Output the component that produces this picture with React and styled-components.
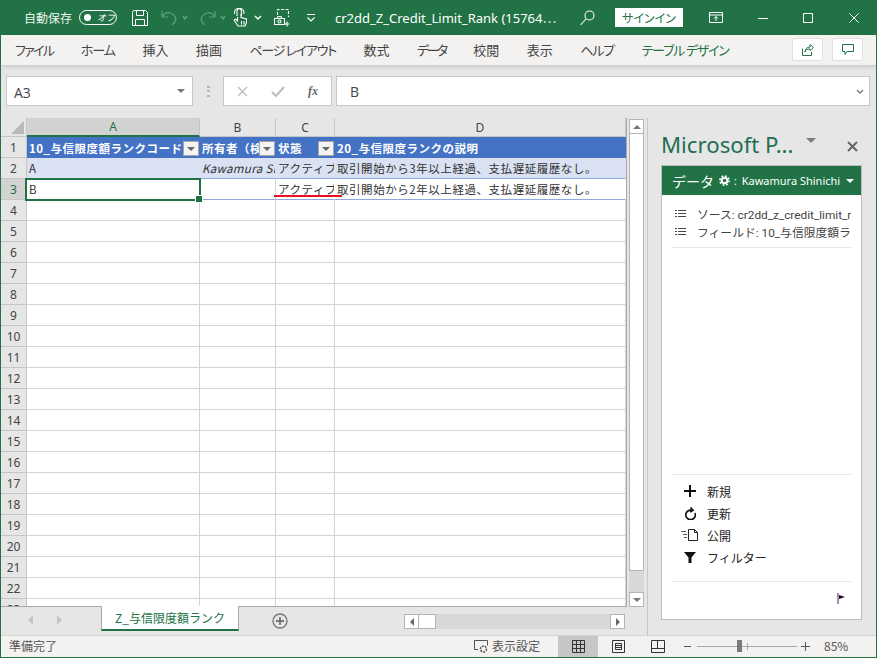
import React from 'react';
import styled, { createGlobalStyle } from 'styled-components';

const JP = `"Noto Sans CJK JP", "Noto Sans", sans-serif`;
const UI = `"Open Sans", "Noto Sans CJK JP", sans-serif`;
const GREEN = '#217346';

const GlobalStyle = createGlobalStyle`
  html, body { margin: 0; padding: 0; background: #e6e6e6; }
  * { box-sizing: border-box; }
`;

const Window = styled.div`
  width: 877px;
  height: 658px;
  display: flex;
  flex-direction: column;
  overflow: hidden;
  border: 1px solid ${GREEN};
  border-top: 0;
  background: #e6e6e6;
  font-family: ${UI};
`;

const TitleBar = styled.div`
  height: 35px;
  flex: none;
  display: flex;
  align-items: center;
  background: ${GREEN};
  color: #fff;
  font-size: 13px;
`;

const Slot = styled.div`
  flex: none;
  display: flex;
  align-items: center;
  margin-left: ${props => props.$left || 0}px;
  svg { display: block; }
`;

const AutoSave = styled.span`
  font-family: ${JP};
  font-size: 12px;
  margin-left: 23px;
  color: #eef5f0;
`;

const Toggle = styled.div`
  width: 38px;
  height: 15px;
  margin-left: 7px;
  border: 1px solid #fff;
  border-radius: 8px;
  display: flex;
  align-items: center;
  padding-left: 4px;
  gap: 6px;
  font-family: ${JP};
  font-size: 9px;
  font-style: italic;
  &::before {
    content: '';
    width: 7px;
    height: 7px;
    border-radius: 50%;
    background: #fff;
  }
`;

const DocTitle = styled.div`
  margin-left: 19px;
  width: 228px;
  white-space: nowrap;
  font-family: "Noto Sans", "Noto Sans CJK JP", sans-serif;
`;

const SignIn = styled.button`
  margin-left: 20px;
  width: 68px;
  height: 19px;
  border: 0;
  padding: 0;
  background: #fff;
  color: ${GREEN};
  font-family: ${JP};
  font-feature-settings: "palt";
  font-size: 12px;
`;

const RibbonTabs = styled.div`
  height: 30px;
  flex: none;
  display: flex;
  align-items: center;
  padding: 0 13px 1px 14px;
  gap: 27.5px;
  background: #f3f2f1;
  box-shadow: 0 2px 4px rgba(0, 0, 0, 0.12);
  position: relative;
  z-index: 1;
`;

const RibbonTab = styled.span`
  flex: none;
  white-space: nowrap;
  font-family: ${JP};
  font-feature-settings: "palt";
  font-size: 13px;
  letter-spacing: ${props => props.$tight || 0}px;
  color: ${props => (props.$active ? GREEN : '#444')};
`;

const RibbonAside = styled.div`
  margin-left: auto;
  display: flex;
  gap: 9px;
`;

const RibbonButton = styled.div`
  width: 31px;
  height: 23px;
  display: flex;
  align-items: center;
  justify-content: center;
  background: #fff;
  border: 1px solid #e1dfdd;
  border-radius: 2px;
`;

const FormulaBar = styled.div`
  height: 53px;
  flex: none;
  display: flex;
  align-items: flex-start;
  padding-top: 11px;
  padding-left: 5px;
`;

const FormulaBox = styled.div`
  height: 30px;
  background: #fff;
  border: 1px solid #c6c6c6;
  display: flex;
  align-items: center;
  color: #444;
  font-size: 14px;
  width: ${props => props.$w}px;
  margin-left: ${props => props.$left || 0}px;
  padding: ${props => props.$pad || '0 7px'};
  justify-content: space-between;
`;

const NameText = styled.span`
  margin-top: 3px;
`;

const Dots = styled.div`
  width: 3px;
  height: 11px;
  margin: 10px 0 0 14px;
  background: repeating-linear-gradient(#b5b5b5 0 2px, transparent 2px 4.5px);
`;

const Fx = styled.i`
  font-family: "Liberation Serif", serif;
  font-weight: bold;
  font-size: 12px;
  color: #666;
`;

const Main = styled.div`
  flex: 1;
  min-height: 0;
  display: flex;
`;

const SheetArea = styled.div`
  width: 647px;
  flex: none;
  display: flex;
  flex-direction: column;
  border-right: 1px solid #c6c6c6;
`;

const GridRow = styled.div`
  height: 489px;
  flex: none;
  display: flex;
`;

const Grid = styled.div`
  width: 626px;
  height: 489px;
  flex: none;
  overflow: hidden;
  position: relative;
  background: #fff;
  border-right: 1px solid #a8a8a8;
  border-bottom: 1px solid #a8a8a8;
  display: grid;
  grid-template-columns: 26px 173px 76px 59px 291px;
  grid-template-rows: 19px;
  grid-auto-rows: 21px;
`;

const Corner = styled.div`
  background: #e6e6e6;
  border-right: 1px solid #c6c6c6;
  border-bottom: 1px solid #c6c6c6;
  position: relative;
  &::after {
    content: '';
    position: absolute;
    right: 2px;
    bottom: 2px;
    border-left: 13px solid transparent;
    border-bottom: 13px solid #b8b8b8;
  }
`;

const ColHead = styled.div`
  display: flex;
  align-items: center;
  justify-content: center;
  background: ${props => (props.$on ? '#d2d2d2' : '#e6e6e6')};
  color: ${props => (props.$on ? GREEN : '#444')};
  border-right: 1px solid #c6c6c6;
  border-bottom: ${props => (props.$on ? `2px solid ${GREEN}` : '1px solid #c6c6c6')};
  font-family: "Noto Sans", sans-serif;
  font-size: 12px;
`;

const RowHead = styled.div`
  display: flex;
  align-items: center;
  justify-content: center;
  background: ${props => (props.$on ? '#d2d2d2' : '#e6e6e6')};
  color: ${props => (props.$on ? GREEN : '#444')};
  border-right: 1px solid #c6c6c6;
  border-bottom: 1px solid #c6c6c6;
  font-family: "Noto Sans", sans-serif;
  font-size: 12px;
`;

const Cell = styled.div`
  border-right: 1px solid #d4d4d4;
  border-bottom: 1px solid #d4d4d4;
`;

const TableCell = styled.div`
  position: relative;
  display: flex;
  align-items: center;
  min-width: 0;
  overflow: hidden;
  white-space: nowrap;
  padding-left: 2px;
  font-family: ${JP};
  font-size: 11.5px;
  letter-spacing: ${props => props.$spacing || 0.55}px;
  color: #333;
  background: ${props => props.$bg};
  border-bottom: 1px solid #8ea9db;
  border-right: 1px solid ${props => props.$line || 'transparent'};
  font-style: ${props => (props.$italic ? 'italic' : 'normal')};
`;

const HeadCell = styled(TableCell)`
  background: #4472c4;
  color: #fff;
  font-weight: bold;
  border-bottom: 0;
  letter-spacing: 0.5px;
`;

const FilterButton = styled.span`
  position: absolute;
  right: 0;
  top: 4px;
  width: 16px;
  height: 15px;
  background: #f4f4f4;
  border: 1px solid #a6a6a6;
  display: flex;
  align-items: center;
  justify-content: center;
  &::after {
    content: '';
    border: 4px solid transparent;
    border-top: 4px solid #666;
    border-bottom: 0;
  }
`;

const Selection = styled.div`
  position: absolute;
  left: 24px;
  top: 60px;
  width: 176px;
  height: 23px;
  border: 2px solid ${GREEN};
  &::after {
    content: '';
    position: absolute;
    right: -4px;
    bottom: -4px;
    width: 6px;
    height: 6px;
    background: ${GREEN};
    border: 1px solid #fff;
  }
`;

const RedLine = styled.div`
  position: absolute;
  left: 273px;
  top: 77px;
  width: 68px;
  height: 2px;
  background: #e81123;
`;

const VScroll = styled.div`
  width: 15px;
  margin: 1px 0 0 2px;
  height: 488px;
  display: flex;
  flex-direction: column;
  flex: none;
  background: #d8d8d8;
`;

const ScrollButton = styled.div`
  width: 15px;
  height: 15px;
  flex: none;
  background: #fff;
  border: 1px solid #b4b4b4;
  display: flex;
  align-items: center;
  justify-content: center;
`;

const VThumb = styled.div`
  width: 15px;
  height: 437px;
  background: #fff;
  border: 1px solid #b4b4b4;
  border-top: 0;
  margin-bottom: auto;
`;

const Arrow = styled.span`
  width: 0;
  height: 0;
  flex: none;
  border: 4px solid transparent;
  ${props => props.$dir === 'up' && `border-bottom: 4px solid ${props.$color || '#777'}; border-top: 0;`}
  ${props => props.$dir === 'down' && `border-top: 4px solid ${props.$color || '#777'}; border-bottom: 0;`}
  ${props => props.$dir === 'left' && `border-right: 4px solid ${props.$color || '#666'}; border-left: 0;`}
  ${props => props.$dir === 'right' && `border-left: 4px solid ${props.$color || '#666'}; border-right: 0;`}
`;

const TabRow = styled.div`
  flex: 1;
  display: flex;
  align-items: flex-start;
`;

const TabNav = styled.div`
  width: 100px;
  height: 25px;
  display: flex;
  align-items: center;
  gap: 24px;
  padding-left: 27px;
`;

const NavArrow = styled.span`
  ${props => (props.$left
    ? 'border-right: 5px solid #c4c4c4;'
    : 'border-left: 5px solid #c4c4c4;')}
  border-top: 5px solid transparent;
  border-bottom: 5px solid transparent;
`;

const SheetTab = styled.div`
  width: 138px;
  height: 25px;
  margin-top: -1px;
  display: flex;
  align-items: center;
  justify-content: center;
  background: #fff;
  border-left: 1px solid #a8a8a8;
  border-right: 1px solid #a8a8a8;
  border-bottom: 2px solid ${GREEN};
  color: ${GREEN};
  font-family: ${JP};
  font-size: 12px;
  position: relative;
  z-index: 1;
`;

const AddSheet = styled.div`
  margin: 6px 0 0 33px;
  width: 16px;
  height: 16px;
  svg { display: block; }
`;

const HScroll = styled.div`
  margin: 7px 0 0 116px;
  width: 221px;
  height: 15px;
  display: flex;
  background: #d8d8d8;
`;

const HThumb = styled.div`
  width: 17px;
  height: 15px;
  background: #fff;
  border: 1px solid #b4b4b4;
  border-left: 0;
  margin-right: auto;
`;

const Pane = styled.div`
  flex: 1;
  min-width: 0;
  padding-left: 13px;
  display: flex;
  flex-direction: column;
`;

const PaneHead = styled.div`
  height: 47px;
  flex: none;
  display: flex;
  align-items: flex-start;
  padding-top: 12px;
`;

const PaneTitle = styled.div`
  font-family: "Noto Sans", sans-serif;
  font-size: 22.2px;
  line-height: 30px;
  color: #1f6f50;
  white-space: nowrap;
`;

const PaneCaret = styled.span`
  margin: 8px 0 0 13px;
  border: 5px solid transparent;
  border-top: 5px solid #7f7f7f;
  border-bottom: 0;
`;

const PaneClose = styled.div`
  margin: 5px 0 0 31px;
`;

const Card = styled.div`
  width: 201px;
  height: 455px;
  flex: none;
  background: #fff;
  border: 1px solid #bdbdbd;
  display: flex;
  flex-direction: column;
`;

const CardHead = styled.div`
  height: 29px;
  flex: none;
  background: ${GREEN};
  color: #fff;
  display: flex;
  align-items: center;
  padding-left: 10px;
  white-space: nowrap;
  overflow: hidden;
`;

const CardTitle = styled.span`
  font-family: ${JP};
  font-size: 14px;
  margin-right: 5px;
`;

const CardColon = styled.span`
  font-size: 10px;
  font-family: "Noto Sans", sans-serif;
  margin-left: 4px;
`;

const CardUser = styled.span`
  font-size: 11px;
  font-family: "Noto Sans", sans-serif;
  margin-left: 5px;
  margin-right: 6px;
`;

const InfoList = styled.div`
  margin: 0 10px;
  padding-top: 9px;
  height: 53px;
  flex: none;
  border-bottom: 1px solid #e6e6e6;
  display: flex;
  flex-direction: column;
`;

const InfoRow = styled.div`
  height: 18px;
  flex: none;
  display: flex;
  align-items: center;
  gap: 11px;
  padding-left: 3px;
  font-family: Roboto, "Noto Sans CJK JP", sans-serif;
  font-size: 11.8px;
  color: #444;
  white-space: nowrap;
  overflow: hidden;
  svg { flex: none; }
`;

const Actions = styled.div`
  margin: auto 10px 0;
  padding: 5px 0 13px;
  border-top: 1px solid #e6e6e6;
  border-bottom: 1px solid #e6e6e6;
  display: flex;
  flex-direction: column;
`;

const ActionRow = styled.div`
  height: 22px;
  display: flex;
  align-items: center;
  font-family: ${JP};
  font-size: 12px;
  color: #222;
`;

const ActionIcon = styled.div`
  width: 35px;
  flex: none;
  display: flex;
  justify-content: center;
`;

const CardFoot = styled.div`
  height: 37px;
  flex: none;
  padding: 11px 16px 0 0;
  display: flex;
  justify-content: flex-end;
`;

const StatusBar = styled.div`
  height: 22px;
  flex: none;
  display: flex;
  align-items: center;
  background: #f3f2f1;
  border-top: 1px solid #d4d4d4;
  color: #555;
  font-family: ${JP};
  font-size: 12px;
`;

const StatusText = styled.span`
  margin: -2px 0 0 ${props => props.$left}px;
  flex: none;
`;

const ViewButton = styled.div`
  width: 40px;
  height: 100%;
  flex: none;
  display: flex;
  align-items: center;
  justify-content: center;
  margin-left: ${props => props.$left || 0}px;
  background: ${props => (props.$on ? '#c8c6c4' : 'transparent')};
`;

const ZoomTrack = styled.div`
  width: 100px;
  height: 1px;
  margin-left: 6px;
  background: #a8a8a8;
  position: relative;
  flex: none;
`;

const ZoomTick = styled.span`
  position: absolute;
  left: 50px;
  top: -3px;
  width: 1px;
  height: 7px;
  background: #a8a8a8;
`;

const ZoomThumb = styled.span`
  position: absolute;
  left: 40px;
  top: -6px;
  width: 5px;
  height: 12px;
  background: #7a7a7a;
`;

const ZoomSign = styled.span`
  width: ${props => props.$w}px;
  margin-left: ${props => props.$left}px;
  height: 1px;
  background: #555;
  flex: none;
  position: relative;
  ${props => props.$plus && `
    &::after {
      content: '';
      position: absolute;
      left: 4px;
      top: -4px;
      width: 1px;
      height: 9px;
      background: #555;
    }
  `}
`;

const Icon = ({ w, h, stroke = '#fff', children, sw = 1 }) => (
  <svg width={w} height={h} viewBox={`0 0 ${w} ${h}`} fill="none" stroke={stroke} strokeWidth={sw}>
    {children}
  </svg>
);

const Chevron = ({ color = '#fff', w = 8 }) => (
  <Icon w={w} h={5} stroke={color} sw={1.4}>
    <path d={`M1 1l${w / 2 - 1} 3 ${w / 2 - 1}-3`} />
  </Icon>
);

const ListIcon = () => (
  <Icon w={11} h={9} stroke="#444">
    <path d="M0 1.5h2M0 4.5h2M0 7.5h2M3 1.5h8M3 4.5h8M3 7.5h8" />
  </Icon>
);

const FlagIcon = () => (
  <Icon w={8} h={11} stroke="#5b0f6b">
    <path d="M1 0v11" />
    <path d="M2 2l6 2-6 2z" fill="#111" stroke="none" />
  </Icon>
);

const colNames = ['A', 'B', 'C', 'D'];
const rows = Array.from({ length: 20 }, (_, i) => i + 4);
const tabs = [
  { label: 'ファイル', tight: -1.7 },
  { label: 'ホーム', tight: -1 },
  { label: '挿入' },
  { label: '描画' },
  { label: 'ページ レイアウト', tight: -1.3 },
  { label: '数式' },
  { label: 'データ', tight: -2.5 },
  { label: '校閲' },
  { label: '表示' },
  { label: 'ヘルプ', tight: -1.2 },
];

export default function App() {
  return (
    <Window>
      <GlobalStyle />
      <TitleBar>
        <AutoSave>自動保存</AutoSave>
        <Toggle>オフ</Toggle>
        <Slot $left={15}>
          <Icon w={16} h={16}>
            <path d="M.5 2.5a2 2 0 0 1 2-2h11l2 2v13H.5z" />
            <path d="M4.5.5v5h7v-5M3.5 15.5v-6h9v6" />
          </Icon>
        </Slot>
        <Slot $left={13}>
          <Icon w={17} h={16} stroke="#5fa07e" sw={1.2}>
            <path d="M1 1v6h6M1 7c2-3 5-5 8-4 5 1 7 6 5 9l-3 3" />
          </Icon>
        </Slot>
        <Slot $left={4}><Chevron color="#5fa07e" w={6} /></Slot>
        <Slot $left={11}>
          <Icon w={17} h={16} stroke="#5fa07e" sw={1.2}>
            <path d="M16 1v6h-6M16 7c-2-3-5-5-8-4-5 1-7 6-5 9l3 3" />
          </Icon>
        </Slot>
        <Slot $left={4}><Chevron color="#5fa07e" w={6} /></Slot>
        <Slot $left={7}>
          <Icon w={14} h={19} sw={1.1}>
            <path d="M4 8V3a2.2 2.2 0 0 1 4.4 0v5M1.5 6V4.500a4.700 4.200 0 0 1 9.400 0V6" />
            <path d="M4.500 9v4l-1.500-1.500c-1-.7-2 .3-1.500 1.300L5 18h7l1.500-3.500V11L8 9.500V6" fill={GREEN} />
            <path d="M8.500 13v3.500M11 13v3.500" />
          </Icon>
        </Slot>
        <Slot $left={7}><Chevron w={8} /></Slot>
        <Slot $left={12}>
          <Icon w={16} h={18} sw={1.1}>
            <path d="M3.500 6V.5h11V8" strokeDasharray="3 1.5" />
            <path d="M.5 9.500h10v6H.5zM3 9.500l1-2h3l1 2" />
            <circle cx="5.5" cy="12.5" r="1.5" />
            <path d="M13 12.500v5M10.500 15h5" />
          </Icon>
        </Slot>
        <Slot $left={16}>
          <Icon w={10} h={8} sw={1.2}>
            <path d="M1 .5h8M1.500 3.500L5 7l3.500-3.500" />
          </Icon>
        </Slot>
        <DocTitle>cr2dd_Z_Credit_Limit_Rank (15764⋯</DocTitle>
        <Slot $left={17}>
          <Icon w={15} h={16} sw={1.1}>
            <circle cx="9.5" cy="5.5" r="4.5" />
            <path d="M6 9l-5.500 6" />
          </Icon>
        </Slot>
        <SignIn>サインイン</SignIn>
        <Slot $left={26}>
          <Icon w={14} h={11}>
            <path d="M.5.500h13v10H.5zM.5 3h13M7 9V4.500M5 6.500L7 4.500l2 2" />
          </Icon>
        </Slot>
        <Slot $left={35}><Icon w={10} h={10}><path d="M0 5.500h10" /></Icon></Slot>
        <Slot $left={35}><Icon w={10} h={10}><path d="M.5.500h9v9h-9z" /></Icon></Slot>
        <Slot $left={36}><Icon w={10} h={10}><path d="M.5.500l9 9M9.500.500l-9 9" /></Icon></Slot>
      </TitleBar>

      <RibbonTabs>
        {tabs.map(t => <RibbonTab key={t.label} $tight={t.tight}>{t.label}</RibbonTab>)}
        <RibbonTab $active $tight={-1.2}>テーブル デザイン</RibbonTab>
        <RibbonAside>
          <RibbonButton>
            <Icon w={12} h={12} stroke={GREEN}>
              <path d="M8 .5l3.500 3L8 6.500V5C5 5 3.500 6 3 8c0-3 2-5 5-5z" />
              <path d="M.5 4.500v7h9V8" />
            </Icon>
          </RibbonButton>
          <RibbonButton>
            <Icon w={12} h={11} stroke={GREEN}>
              <path d="M.5.500h11v7H5L3 10.500v-3H.5z" />
            </Icon>
          </RibbonButton>
        </RibbonAside>
      </RibbonTabs>

      <FormulaBar>
        <FormulaBox $w={187}>
          <NameText>A3</NameText>
          <Arrow $dir="down" />
        </FormulaBox>
        <Dots />
        <FormulaBox $w={109} $left={13} $pad="0 13px">
          <Icon w={11} h={11} stroke="#bdbdbd" sw={1.4}><path d="M1 1l9 9M10 1l-9 9" /></Icon>
          <Icon w={14} h={11} stroke="#bdbdbd" sw={2}><path d="M1 6l4 4 8-9" /></Icon>
          <Fx>fx</Fx>
        </FormulaBox>
        <FormulaBox $w={534} $left={4} $pad="0 5px 0 13px">
          B
          <Chevron color="#777" w={8} />
        </FormulaBox>
      </FormulaBar>

      <Main>
        <SheetArea>
          <GridRow>
            <Grid>
              <Corner />
              {colNames.map((c, i) => <ColHead key={c} $on={i === 0}>{c}</ColHead>)}

              <RowHead>1</RowHead>
              <HeadCell>10_与信限度額ランクコード<FilterButton /></HeadCell>
              <HeadCell>所有者（検索）<FilterButton /></HeadCell>
              <HeadCell>状態<FilterButton /></HeadCell>
              <HeadCell>20_与信限度ランクの説明</HeadCell>

              <RowHead>2</RowHead>
              <TableCell $bg="#d9e1f2">A</TableCell>
              <TableCell $bg="#d9e1f2" $italic $spacing={0.35}>Kawamura Shinichi</TableCell>
              <TableCell $bg="#d9e1f2">アクティブ</TableCell>
              <TableCell $bg="#d9e1f2">取引開始から3年以上経過、支払遅延履歴なし。</TableCell>

              <RowHead $on>3</RowHead>
              <TableCell $bg="#fff">B</TableCell>
              <TableCell $bg="#fff" $line="#d4d4d4" />
              <TableCell $bg="#fff">アクティブ</TableCell>
              <TableCell $bg="#fff">取引開始から2年以上経過、支払遅延履歴なし。</TableCell>

              {rows.map(r => (
                <React.Fragment key={r}>
                  <RowHead>{r}</RowHead>
                  <Cell /><Cell /><Cell /><Cell />
                </React.Fragment>
              ))}
              <Selection />
              <RedLine />
            </Grid>
            <VScroll>
              <ScrollButton><Arrow $dir="up" /></ScrollButton>
              <VThumb />
              <ScrollButton><Arrow $dir="down" /></ScrollButton>
            </VScroll>
          </GridRow>
          <TabRow>
            <TabNav>
              <NavArrow $left />
              <NavArrow />
            </TabNav>
            <SheetTab>Z_与信限度額ランク</SheetTab>
            <AddSheet>
              <Icon w={16} h={16} stroke="#777" sw={1.3}>
                <circle cx="8" cy="8" r="7" />
                <path d="M8 4v8M4 8h8" strokeWidth="1.8" />
              </Icon>
            </AddSheet>
            <HScroll>
              <ScrollButton><Arrow $dir="left" /></ScrollButton>
              <HThumb />
              <ScrollButton><Arrow $dir="right" /></ScrollButton>
            </HScroll>
          </TabRow>
        </SheetArea>

        <Pane>
          <PaneHead>
            <PaneTitle>Microsoft P...</PaneTitle>
            <PaneCaret />
            <PaneClose>
              <Icon w={11} h={11} stroke="#666" sw={2}><path d="M1 1l9 9M10 1l-9 9" /></Icon>
            </PaneClose>
          </PaneHead>
          <Card>
            <CardHead>
              <CardTitle>データ</CardTitle>
              <Icon w={11} h={11} stroke="#fff" sw={2}>
                <circle cx="5.5" cy="5.5" r="2.8" />
                <circle cx="5.5" cy="5.5" r="4.6" strokeWidth="1.6" strokeDasharray="1.8 1.8" />
              </Icon>
              <CardColon>:</CardColon>
              <CardUser>Kawamura Shinichi</CardUser>
              <Arrow $dir="down" $color="#fff" />
            </CardHead>
            <InfoList>
              <InfoRow><ListIcon />ソース: cr2dd_z_credit_limit_r</InfoRow>
              <InfoRow><ListIcon />フィールド: 10_与信限度額ラ</InfoRow>
            </InfoList>
            <Actions>
              <ActionRow>
                <ActionIcon>
                  <Icon w={12} h={12} stroke="#111" sw={2}><path d="M6 0v12M0 6h12" /></Icon>
                </ActionIcon>
                新規
              </ActionRow>
              <ActionRow>
                <ActionIcon>
                  <Icon w={12} h={13} stroke="#111" sw={1.7}>
                    <path d="M8 3.300a4.800 4.800 0 1 0 3 2.700" />
                    <path d="M6.500 .5L9 3.300 6 5" />
                  </Icon>
                </ActionIcon>
                更新
              </ActionRow>
              <ActionRow>
                <ActionIcon>
                  <Icon w={18} h={12} stroke="#222">
                    <path d="M0 2.500h5M2 5.500h4M3 8.500h3" stroke="#555" />
                    <path d="M7.500 .5h6l3 3v8h-9zM13.500 .5v3h3" />
                  </Icon>
                </ActionIcon>
                公開
              </ActionRow>
              <ActionRow>
                <ActionIcon>
                  <Icon w={12} h={11} stroke="none">
                    <path d="M0 0h12L7.500 5.500V11h-3V5.500z" fill="#111" />
                  </Icon>
                </ActionIcon>
                フィルター
              </ActionRow>
            </Actions>
            <CardFoot><FlagIcon /></CardFoot>
          </Card>
        </Pane>
      </Main>

      <StatusBar>
        <StatusText $left={8}>準備完了</StatusText>
        <Slot $left={417}>
          <Icon w={14} h={13} stroke="#555">
            <path d="M4 9.500H.5v-9h13v5" />
            <circle cx="9.5" cy="9" r="3" strokeDasharray="2 1" strokeWidth="1.5" />
          </Icon>
        </Slot>
        <StatusText $left={4}>表示設定</StatusText>
        <ViewButton $on $left={18}>
          <Icon w={13} h={13} stroke="#333">
            <path d="M.5.500h12v12H.5zM.5 4.500h12M.5 8.500h12M4.500 .5v12M8.500 .5v12" />
          </Icon>
        </ViewButton>
        <ViewButton>
          <Icon w={13} h={13} stroke="#333">
            <path d="M.5.500h12v12H.5zM3.500 3.500h6v6h-6zM3.500 5.500h6M3.500 7.500h6" />
          </Icon>
        </ViewButton>
        <ViewButton>
          <Icon w={14} h={13} stroke="#333">
            <path d="M.5.500h13v12H.5zM.5 8.500h6v-8M6.500 8.500h7" />
          </Icon>
        </ViewButton>
        <ZoomSign $w={7} $left={6} />
        <ZoomTrack>
          <ZoomThumb />
          <ZoomTick />
        </ZoomTrack>
        <ZoomSign $w={9} $left={4} $plus />
        <StatusText $left={14}>85%</StatusText>
      </StatusBar>
    </Window>
  );
}
